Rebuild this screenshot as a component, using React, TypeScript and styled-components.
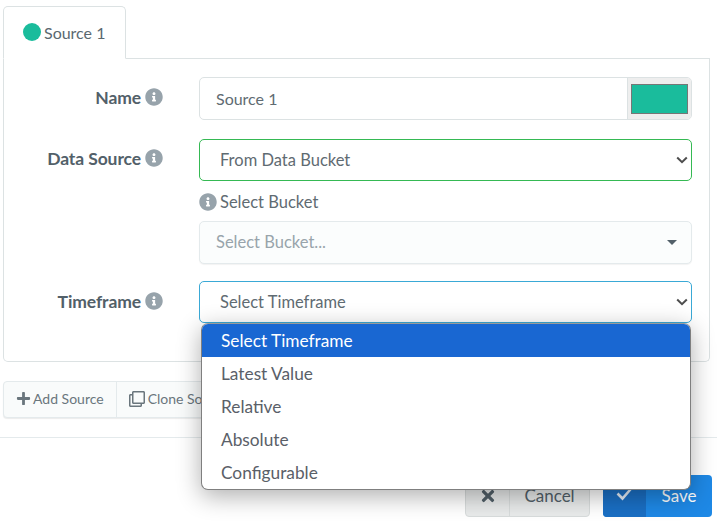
import { createGlobalStyle } from 'styled-components';
import styled from 'styled-components';
import { FaInfoCircle, FaPlus, FaRegClone, FaTimes } from 'react-icons/fa';

const GlobalStyle = createGlobalStyle`
  html, body {
    margin: 0;
    padding: 0;
    background: #fff;
    overflow: hidden;
  }
  body {
    font-family: "Lato", "Open Sans", sans-serif;
    color: #526069;
    font-size: 16.5px;
  }
`;

const TIMEFRAMES = ['Select Timeframe', 'Latest Value', 'Relative', 'Absolute', 'Configurable'];

const Page = styled.div`
  width: 717px;
  height: 521px;
  position: relative;
  overflow: hidden;
  padding-top: 6px;
  box-sizing: border-box;
`;

const TabBar = styled.div`
  display: flex;
  margin-left: 3px;
  margin-right: 7px;
  height: 53px;
  box-sizing: border-box;
  border-bottom: 1px solid #dce2e3;
`;

const Tab = styled.div`
  width: 123px;
  height: 53px;
  box-sizing: border-box;
  padding: 0 0 1px 19px;
  display: flex;
  align-items: center;
  gap: 3px;
  background: #fff;
  border: 1px solid #dce2e3;
  border-bottom-color: #fff;
  border-radius: 5px 5px 0 0;
  font-size: 16px;
  color: #5a6870;
`;

const Dot = styled.span`
  width: 18px;
  height: 18px;
  border-radius: 50%;
  background: #1abc9c;
`;

const Panel = styled.div`
  margin: 0 7px 0 3px;
  height: 303px;
  box-sizing: border-box;
  border: 1px solid #dce2e3;
  border-top: 0;
  border-radius: 0 0 5px 5px;
  padding: 18px 17px 0 0;
  display: flex;
  flex-direction: column;
`;

const Row = styled.div<{ $gap?: number; $top?: number }>`
  display: grid;
  grid-template-columns: 195px 1fr;
  margin-top: ${(p) => p.$top ?? 0}px;
  margin-bottom: ${(p) => p.$gap ?? 0}px;
`;

const Label = styled.div<{ $height?: number }>`
  display: flex;
  justify-content: flex-end;
  align-items: center;
  gap: 4px;
  height: ${(p) => p.$height ?? 40}px;
  padding-right: 36px;
  font-weight: 700;
  font-size: 17.5px;
  letter-spacing: -0.1px;
  color: #526069;
`;

const InfoIcon = styled(FaInfoCircle)`
  width: 18px;
  height: 18px;
  color: #97a3ab;
  flex: none;
`;

const InputGroup = styled.div`
  display: flex;
  height: 43px;
  box-sizing: border-box;
  border: 1px solid #dce2e3;
  border-radius: 5px;
  overflow: hidden;
`;

const NameText = styled.div`
  flex: 1;
  display: flex;
  align-items: center;
  padding: 0 0 1px 16px;
  font-size: 16px;
  color: #5f6b72;
`;

const SwatchBox = styled.div`
  width: 64px;
  box-sizing: border-box;
  border-left: 1px solid #dce2e3;
  background: #eeeeee;
  padding: 6px 0 0 3px;
`;

const Swatch = styled.div`
  width: 57px;
  height: 30px;
  box-sizing: border-box;
  background: #1abc9c;
  border: 1px solid #767676;
`;

const SelectBox = styled.div<{ $border: string }>`
  height: 42px;
  box-sizing: border-box;
  border: 1px solid ${(p) => p.$border};
  border-radius: 5px;
  background: #fff;
  display: flex;
  align-items: center;
  justify-content: space-between;
  padding: 0 3px 0 20px;
  color: #5f6b72;
`;

const Chevron = () => (
  <svg width="12" height="8" viewBox="0 0 12 8" style={{ flex: 'none' }}>
    <path d="M1.2 1.5 6 6.2l4.8-4.7" fill="none" stroke="#4d4d4d" strokeWidth="2" />
  </svg>
);

const SubLabel = styled.div`
  display: flex;
  align-items: center;
  gap: 3px;
  height: 40px;
  padding-top: 1px;
  box-sizing: border-box;
  color: #5f6b72;
`;

const Bucket = styled.div`
  height: 43px;
  box-sizing: border-box;
  border: 1px solid #e4eaec;
  border-radius: 5px;
  background: #fbfdfd;
  display: flex;
  align-items: center;
  justify-content: space-between;
  padding: 0 14px 2px 16px;
  color: #98a4ab;
  box-shadow: 0 1px 1px rgba(0, 0, 0, 0.05);
`;

const Caret = styled.span`
  width: 0;
  height: 0;
  margin-top: 2px;
  border-left: 5px solid transparent;
  border-right: 5px solid transparent;
  border-top: 5px solid #526069;
`;

const ButtonBar = styled.div`
  display: inline-flex;
  margin: 19px 0 0 3px;
  height: 37px;
  box-sizing: border-box;
  border: 1px solid #e4eaec;
  border-radius: 4px;
  background: #f9fbfb;
  box-shadow: 0 1px 1px rgba(0, 0, 0, 0.08);
  font-size: 14px;
  color: #6a767d;
`;

const BarButton = styled.div<{ $divided?: boolean }>`
  display: flex;
  align-items: center;
  gap: ${(p) => (p.$divided ? 3 : 2)}px;
  padding: 0 12px 2px;
  border-left: ${(p) => (p.$divided ? '1px solid #e4eaec' : '0')};
  svg {
    width: ${(p) => (p.$divided ? 16 : 15)}px;
    height: ${(p) => (p.$divided ? 16 : 15)}px;
  }
`;

const Divider = styled.div`
  height: 1px;
  background: #e4eaec;
  margin-top: 19px;
`;

const Footer = styled.div`
  display: flex;
  justify-content: flex-end;
  gap: 13px;
  padding: 37px 5px 0 0;
`;

const IconButton = styled.div<{ $primary?: boolean }>`
  display: flex;
  height: 42px;
  box-sizing: border-box;
  border-radius: 4px;
  overflow: hidden;
  background: ${(p) => (p.$primary ? '#1e88e5' : '#e9ebeb')};
  border: ${(p) => (p.$primary ? '0' : '1px solid #d8dcdc')};
  color: ${(p) => (p.$primary ? '#fff' : '#526069')};
`;

const ButtonIcon = styled.span<{ $primary?: boolean; $width: number }>`
  width: ${(p) => p.$width}px;
  display: flex;
  align-items: center;
  justify-content: center;
  background: ${(p) => (p.$primary ? '#1a6fc4' : 'transparent')};
  border-right: ${(p) => (p.$primary ? '0' : '1px solid #d8dcdc')};
  svg {
    width: 18px;
    height: 18px;
  }
`;

const ButtonText = styled.span<{ $width: number }>`
  width: ${(p) => p.$width}px;
  display: flex;
  align-items: center;
  justify-content: center;
  padding-bottom: 2px;
  font-size: 17px;
`;

const CheckMark = () => (
  <svg viewBox="0 0 18 16" style={{ width: 18, height: 16, marginTop: -6 }}>
    <path d="M1.5 8.5 6.5 13.5 16.5 2" fill="none" stroke="#e4eef8" strokeWidth="2.6" />
  </svg>
);

const Menu = styled.ul`
  position: absolute;
  left: 201px;
  top: 323px;
  width: 490px;
  height: 167px;
  box-sizing: border-box;
  margin: 0;
  padding: 0;
  list-style: none;
  background: #fff;
  border: 1px solid #7f7f7f;
  border-top-color: #9a9a9a;
  border-radius: 7px;
  box-shadow: 0 6px 24px rgba(0, 0, 0, 0.32);
  overflow: hidden;
`;

const MenuItem = styled.li<{ $active?: boolean }>`
  height: 33px;
  display: flex;
  align-items: center;
  padding-left: 19px;
  box-sizing: border-box;
  font-size: 17.3px;
  background: ${(p) => (p.$active ? '#1967d2' : 'transparent')};
  color: ${(p) => (p.$active ? '#fff' : '#5a6068')};
`;

export default function App() {
  return (
    <Page>
      <GlobalStyle />
      <TabBar>
        <Tab>
          <Dot />
          Source 1
        </Tab>
      </TabBar>
      <Panel>
        <Row $gap={19}>
          <Label>
            Name <InfoIcon />
          </Label>
          <InputGroup>
            <NameText>Source 1</NameText>
            <SwatchBox>
              <Swatch />
            </SwatchBox>
          </InputGroup>
        </Row>
        <Row>
          <Label $height={38}>
            Data Source <InfoIcon />
          </Label>
          <div>
            <SelectBox $border="#35b953">
              From Data Bucket
              <Chevron />
            </SelectBox>
            <SubLabel>
              <InfoIcon /> Select Bucket
            </SubLabel>
            <Bucket>
              Select Bucket...
              <Caret />
            </Bucket>
          </div>
        </Row>
        <Row $top={17}>
          <Label>
            Timeframe <InfoIcon />
          </Label>
          <SelectBox $border="#3aa9d6">
            Select Timeframe
            <Chevron />
          </SelectBox>
        </Row>
      </Panel>
      <ButtonBar>
        <BarButton>
          <FaPlus />
          Add Source
        </BarButton>
        <BarButton $divided>
          <FaRegClone />
          Clone Source
        </BarButton>
      </ButtonBar>
      <Divider />
      <Footer>
        <IconButton>
          <ButtonIcon $width={43}>
            <FaTimes />
          </ButtonIcon>
          <ButtonText $width={79}>Cancel</ButtonText>
        </IconButton>
        <IconButton $primary>
          <ButtonIcon $primary $width={43}>
            <CheckMark />
          </ButtonIcon>
          <ButtonText $width={66}>Save</ButtonText>
        </IconButton>
      </Footer>
      <Menu>
        {TIMEFRAMES.map((t, i) => (
          <MenuItem key={t} $active={i === 0}>
            {t}
          </MenuItem>
        ))}
      </Menu>
    </Page>
  );
}
